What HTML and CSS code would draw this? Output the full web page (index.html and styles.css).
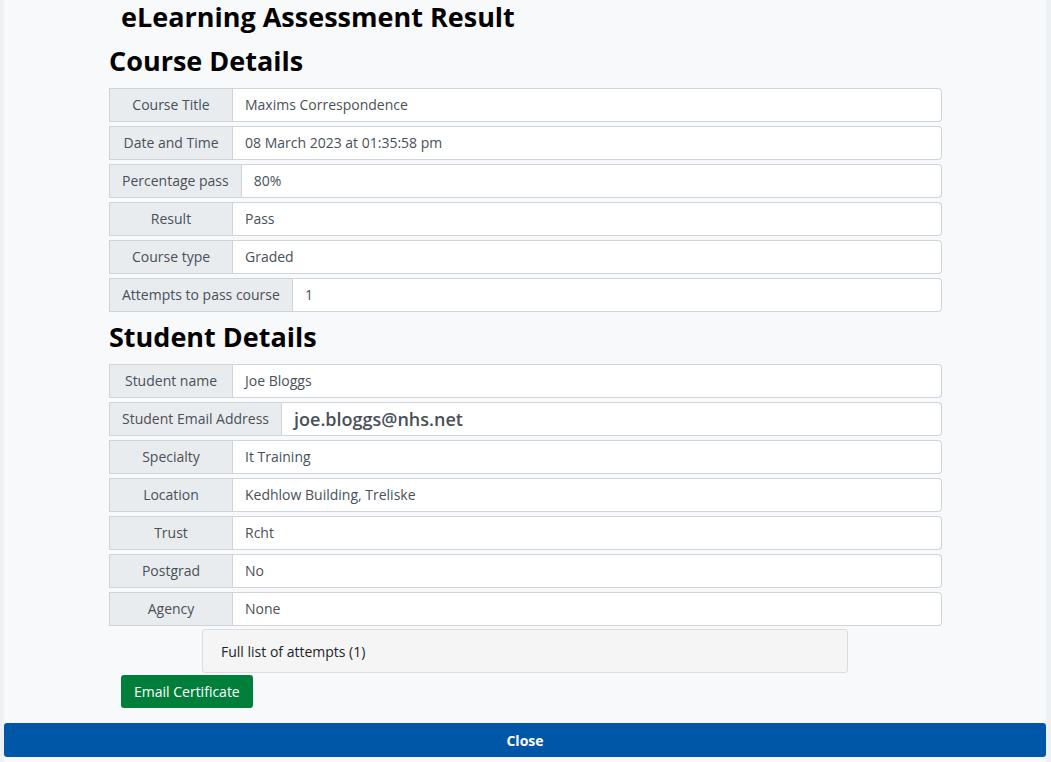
FILE: index.html
```html
<!DOCTYPE html>
<html lang="en">
<head>
<meta charset="utf-8">
<title>eLearning Assessment Result</title>
<link rel="stylesheet" href="styles.css">
</head>
<body>
<div class="page">
  <div class="content">
    <h1 class="title">eLearning Assessment Result</h1>
    <h2 class="section">Course Details</h2>
    <div class="row"><div class="label">Course Title</div><div class="value">Maxims Correspondence</div></div>
    <div class="row"><div class="label">Date and Time</div><div class="value">08 March 2023 at 01:35:58 pm</div></div>
    <div class="row"><div class="label">Percentage pass</div><div class="value">80%</div></div>
    <div class="row"><div class="label">Result</div><div class="value">Pass</div></div>
    <div class="row"><div class="label">Course type</div><div class="value">Graded</div></div>
    <div class="row"><div class="label">Attempts to pass course</div><div class="value">1</div></div>
    <h2 class="section section-student">Student Details</h2>
    <div class="row"><div class="label">Student name</div><div class="value">Joe Bloggs</div></div>
    <div class="row"><div class="label">Student Email Address</div><div class="value value-email">joe.bloggs@nhs.net</div></div>
    <div class="row"><div class="label">Specialty</div><div class="value">It Training</div></div>
    <div class="row"><div class="label">Location</div><div class="value">Kedhlow Building, Treliske</div></div>
    <div class="row"><div class="label">Trust</div><div class="value">Rcht</div></div>
    <div class="row"><div class="label">Postgrad</div><div class="value">No</div></div>
    <div class="row"><div class="label">Agency</div><div class="value">None</div></div>
  </div>
  <div class="attempts">Full list of attempts (1)</div>
  <div class="actions"><button class="btn-email" type="button">Email Certificate</button></div>
  <button class="btn-close" type="button">Close</button>
</div>
</body>
</html>
```
FILE: styles.css
```css
html, body {
  margin: 0;
  padding: 0;
}
body {
  background: #eef1f3;
  font-family: "Open Sans", "Noto Sans", "Liberation Sans", sans-serif;
  color: #212529;
}
.page {
  margin: 0 5px 0 4px;
  background: #f8f9fa;
  height: 762px;
  display: flex;
  flex-direction: column;
}
.content {
  padding: 0 104px 0 105px;
}
.title {
  margin: 0 0 0 12px;
  font-size: 27px;
  line-height: 34px;
  font-weight: 700;
  color: #000;
}
.section {
  margin: 10px 0 10px 0;
  font-size: 27px;
  line-height: 34px;
  font-weight: 700;
  color: #000;
}
.section-student {
  margin-top: 8px;
  margin-bottom: 10px;
}
.row {
  display: flex;
  height: 34px;
  margin-bottom: 4px;
  font-size: 14px;
  color: #495057;
}
.label {
  box-sizing: border-box;
  min-width: 124px;
  padding: 0 12px 1px;
  display: flex;
  align-items: center;
  justify-content: center;
  background: #e9ecef;
  border: 1px solid #ced4da;
  white-space: nowrap;
}
.value {
  flex: 1;
  box-sizing: border-box;
  display: flex;
  align-items: center;
  padding: 0 12px 1px;
  background: #fff;
  border: 1px solid #ced4da;
  border-left: 0;
  border-radius: 0 4px 4px 0;
}
.value-email {
  font-size: 18px;
  font-weight: 600;
}
.attempts {
  box-sizing: border-box;
  align-self: center;
  width: 646px;
  height: 44px;
  margin-top: -1px;
  padding: 0 18px;
  display: flex;
  align-items: center;
  background: #f5f5f5;
  border: 1px solid #dddddd;
  border-radius: 3px;
  font-size: 14px;
  color: #212529;
}
.actions {
  padding: 2px 0 0 117px;
}
.btn-email {
  height: 33px;
  padding: 0 13px;
  background: #007f3b;
  color: #fff;
  border: 0;
  border-radius: 3px;
  font-family: inherit;
  font-size: 14px;
}
.btn-close {
  margin-top: 15px;
  height: 34px;
  background: #0057a8;
  color: #fff;
  border: 0;
  border-radius: 3px;
  font-family: inherit;
  font-size: 14px;
  font-weight: 700;
}
```
